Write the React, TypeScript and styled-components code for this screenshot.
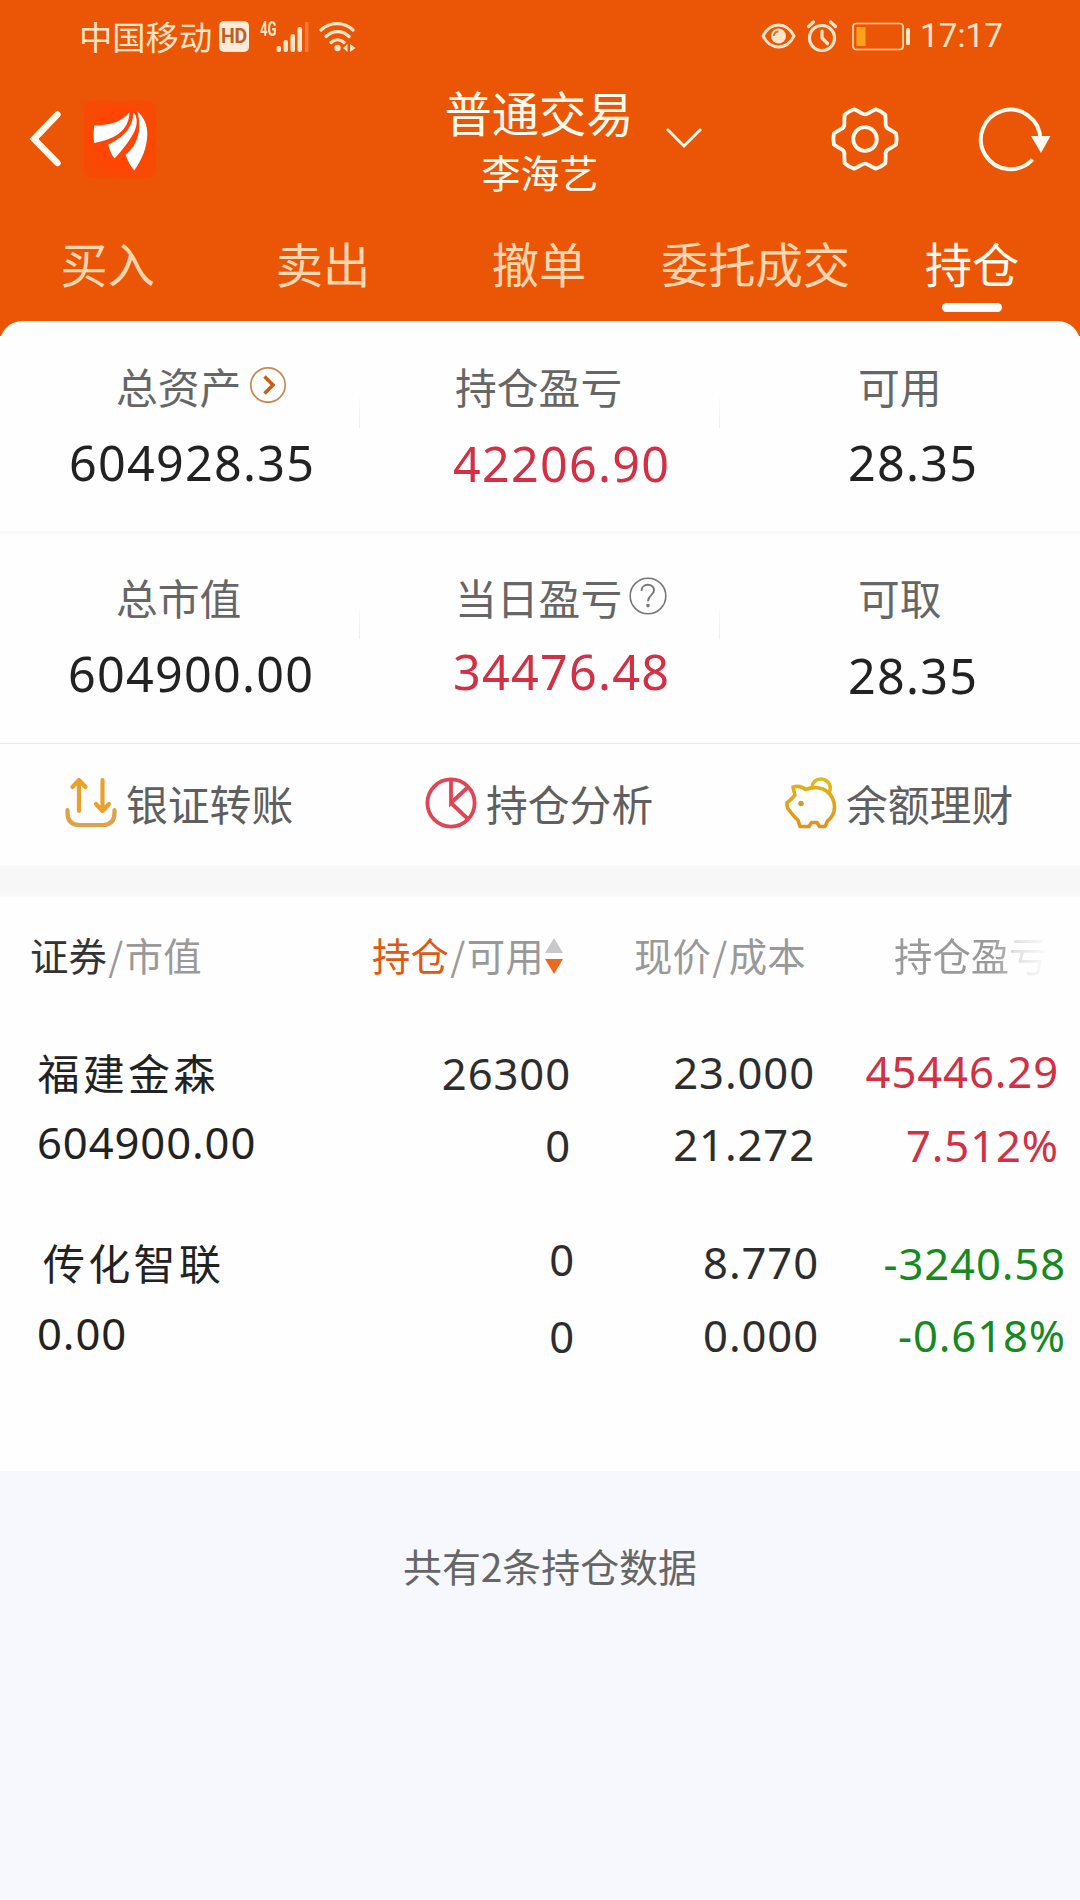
import React from "react";
import styled, { createGlobalStyle } from "styled-components";

const HAN = '"Noto Sans CJK SC", sans-serif';
const NUM = '"Noto Sans", "Noto Sans CJK SC", sans-serif';

const Global = createGlobalStyle`
  * { box-sizing: border-box; }
  body { margin: 0; background: #f7f8fd; }
  svg { display: block; flex: none; }
`;

const Page = styled.div`
  width: 1080px;
  height: 1900px;
  overflow: hidden;
  background: #f7f8fd;
  font-family: ${HAN};
  white-space: nowrap;
`;

const Header = styled.header`
  height: 336px;
  background: #eb5606;
  color: #fffaf0;
  display: flex;
  flex-direction: column;
`;

const StatusBar = styled.div`
  height: 74px;
  padding: 0 78px 0 79px;
  display: flex;
  justify-content: space-between;
  align-items: center;
  color: #ffe6c8;
`;

const StatusGroup = styled.div`
  display: flex;
  align-items: center;
  height: 74px;
`;

const Carrier = styled.span`
  font-size: 33.3px;
  line-height: 71px;
  height: 74px;
  width: 140px;
`;

const HdBadge = styled.span`
  width: 30px;
  height: 31px;
  margin-right: 11px;
  margin-bottom: 2px;
  border-radius: 5px;
  background: #fdebd8;
  color: #bb5f28;
  font: 700 19.5px/31px "Roboto", sans-serif;
  letter-spacing: -0.3px;
  text-align: center;
`;

const NetType = styled.span`
  width: 16px;
  font: 700 20px/20px "Roboto", sans-serif;
  margin-bottom: 17px;
  transform: scaleX(0.66);
  transform-origin: left center;
`;

const Signal = styled.svg`
  margin-right: 9px;
`;

const Clock = styled.span`
  font: 400 33.3px/72px "Roboto", sans-serif;
  height: 74px;
  width: 82px;
`;

const TitleBar = styled.div`
  height: 130px;
  display: grid;
  grid-template-columns: 84px 345px 220px 101px 190px 1fr;
  align-items: center;
`;

const BackSlot = styled.div`
  padding-left: 27px;
`;

const LogoBox = styled.div`
  width: 72px;
  height: 77px;
  background: radial-gradient(closest-side, #ff4503 0, #ff4503 70%, #f74b05 100%);
  border-radius: 8px;
  box-shadow: 0 0 4px #f35005;
`;

const Titles = styled.div`
  display: flex;
  flex-direction: column;
  align-items: center;
  height: 130px;
`;

const Title = styled.div`
  font-size: 47.3px;
  line-height: 60px;
  margin-top: 8px;
`;

const Subtitle = styled.div`
  font-size: 39px;
  line-height: 50px;
  margin-top: 4px;
  padding-left: 2px;
`;

const TabBar = styled.nav`
  height: 117px;
  display: grid;
  grid-template-columns: 215px 216px 216px 217px 216px;
`;

const Tab = styled.div<{ $active?: boolean }>`
  display: flex;
  flex-direction: column;
  align-items: center;
  padding-top: 29px;
  font-size: 47.3px;
  line-height: 60px;
  color: ${(p) => (p.$active ? "#fffaf0" : "#ffd6b0")};
`;

const TabLine = styled.div`
  width: 60px;
  height: 9px;
  margin-top: 10px;
  border-radius: 5px;
  background: #fff;
`;

const CardClip = styled.div`
  height: 15px;
  overflow: hidden;
`;

const CardEdge = styled.div`
  height: 44px;
  border-radius: 22px 22px 0 0;
  background: #fefefe;
`;

const Summary = styled.section`
  background: #fefefe;
`;

const SummaryRow = styled.div<{ $h: number; $line: string }>`
  height: ${(p) => p.$h}px;
  display: grid;
  grid-template-columns: 360px 360px 360px;
  border-bottom: ${(p) => p.$line};
`;

const Metric = styled.div<{ $top: number }>`
  padding-top: ${(p) => p.$top}px;
  display: grid;
  grid-template-columns: 1fr 1px;
`;

const MetricRule = styled.i<{ $show: boolean }>`
  height: 30px;
  margin-top: 37px;
  width: 1px;
  background: ${(p) => (p.$show ? "linear-gradient(#fafafa, #ececec)" : "transparent")};
`;

const MetricLabel = styled.div<{ $x: number }>`
  height: 50px;
  padding-left: ${(p) => p.$x}px;
  display: flex;
  align-items: center;
  font-size: 41.8px;
  line-height: 50px;
  color: #666;
`;

const MetricValue = styled.div<{ $x: number; $gap: number; $red?: boolean }>`
  margin-top: ${(p) => p.$gap}px;
  padding-left: ${(p) => p.$x}px;
  font-family: ${NUM};
  font-size: 48.5px;
  line-height: 60px;
  letter-spacing: 1.25px;
  color: ${(p) => (p.$red ? "#d13045" : "#222")};
`;

const IconAfter = styled.span<{ $gap: number }>`
  margin-left: ${(p) => p.$gap}px;
  margin-bottom: 3px;
`;

const Actions = styled.section`
  height: 121px;
  padding-bottom: 3px;
  background: #fefefe;
  display: grid;
  grid-template-columns: 360px 360px 360px;
`;

const Action = styled.div`
  padding-left: 65px;
  display: flex;
  align-items: center;
  gap: 9px;
  font-size: 41.8px;
  line-height: 50px;
  color: #5f5f5f;
`;

const Band = styled.div`
  height: 32px;
  background: linear-gradient(#fafafa 0, #f7f7f7 4px, #f7f7f7 27px, #fafafa 100%);
`;

const Table = styled.section`
  height: 574px;
  background: #fefefe;
`;

const HeadRow = styled.div`
  height: 134px;
  padding: 32px 0 0 30px;
  display: grid;
  grid-template-columns: 342px 262px 260px 1fr;
  font-size: 38.4px;
  line-height: 50px;
  color: #999;
`;

const HeadCell = styled.div<{ $fade?: boolean }>`
  display: flex;
  height: 50px;
  ${(p) =>
    p.$fade &&
    `width: 160px;
     mask-image: linear-gradient(90deg, #000 0, #000 96px, rgba(0,0,0,.75) 113px, rgba(0,0,0,.3) 120px, transparent 156px);`}
`;

const Strong = styled.span<{ $orange?: boolean }>`
  color: ${(p) => (p.$orange ? "#dd5a12" : "#333")};
`;

const Slash = styled.span`
  width: 18px;
  text-align: center;
`;

const SortIcon = styled.svg`
  margin: 9px 0 0 1px;
`;

const StockRow = styled.div<{ $cols: string; $h: number }>`
  height: ${(p) => p.$h}px;
  display: grid;
  grid-template-columns: ${(p) => p.$cols};
`;

const Cell = styled.div<{ $top: number; $gap: number; $color: string; $left?: boolean }>`
  padding-top: ${(p) => p.$top}px;
  padding-left: ${(p) => (p.$left ? 37 : 0)}px;
  display: flex;
  flex-direction: column;
  gap: ${(p) => p.$gap}px;
  text-align: ${(p) => (p.$left ? "left" : "right")};
  align-items: ${(p) => (p.$left ? "flex-start" : "flex-end")};
  font-family: ${NUM};
  font-size: 43.6px;
  line-height: 60px;
  letter-spacing: 0.9px;
  color: ${(p) => p.$color};
`;

const StockName = styled.div<{ $indent: number }>`
  padding-left: ${(p) => p.$indent}px;
  font-family: ${HAN};
  font-size: 42px;
  line-height: 60px;
  letter-spacing: 3.3px;
`;

const Footer = styled.footer`
  padding-top: 69px;
  padding-left: 403px;
  font-size: 38.9px;
  line-height: 50px;
  color: #666;
`;

const gearPath = (() => {
  const p = (deg: number, r: number) => {
    const a = (deg * Math.PI) / 180;
    return `${(Math.cos(a) * r).toFixed(2)} ${(Math.sin(a) * r).toFixed(2)}`;
  };
  let d = `M${p(-10, 31.6)}`;
  for (let k = 0; k < 6; k++) {
    const a = k * 60;
    d += ` Q${p(a, 32.2)} ${p(a + 10, 31.6)} Q${p(a + 18, 28)} ${p(a + 22, 26.2)} Q${p(a + 30, 23.2)} ${p(a + 38, 26.2)} Q${p(a + 42, 28)} ${p(a + 50, 31.6)}`;
  }
  return d + "Z";
})();

const ArrowBadge = () => (
  <svg width="37" height="37" viewBox="0 0 37 37" fill="none">
    <circle cx="18" cy="19" r="17.200" stroke="#c98850" strokeWidth="1.700" />
    <path d="M14.500 10.500l8.500 8.500-8.500 8.500" stroke="#cc5c16" strokeWidth="3.600" />
  </svg>
);

const HelpBadge = () => (
  <svg width="38" height="38" viewBox="0 0 38 38" fill="none" stroke="#777" strokeWidth="1.600">
    <circle cx="19" cy="19" r="17.800" />
    <path d="M12.500 14c0-4 2.800-6.300 6.300-6.300 3.600 0 6.200 2.200 6.200 5.500 0 5-6 5-6 11" strokeWidth="1.900" />
    <circle cx="19" cy="28.600" r="1" fill="#777" />
  </svg>
);

const TransferIcon = () => (
  <svg width="52" height="52" viewBox="0 0 52 52" fill="none" stroke="#eba02c" strokeWidth="4.200" strokeLinecap="round" strokeLinejoin="round">
    <path d="M14 34V3M7.500 10L14 3l6.500 7" />
    <path d="M37.500 3v31M31 27l6.500 7 6.500-7" />
    <path d="M2.500 33v3c0 8 4 12 12 12h23c8 0 12-4 12-12v-3" stroke="#dda24a" />
  </svg>
);

const PieIcon = () => (
  <svg width="52" height="52" viewBox="0 0 52 52" fill="none" stroke="#df4655" strokeWidth="3.800">
    <circle cx="26" cy="26" r="23.600" />
    <path d="M26 2.500V26l17-16M26 26l17 16" />
  </svg>
);

const PigIcon = () => (
  <svg width="52" height="52" viewBox="0 0 52 52" fill="none" strokeWidth="3.600" strokeLinejoin="round" strokeLinecap="round">
    <defs>
      <linearGradient id="pig" x1="0" y1="0" x2="0" y2="1">
        <stop offset="0" stopColor="#e0b01c" />
        <stop offset="1" stopColor="#e39220" />
      </linearGradient>
    </defs>
    <path d="M27 10.500C27.500 5 31 2 36 2s9.300 4 9.300 9c0 2-.6 3.500-1.300 5" stroke="#e2b81c" />
    <path
      d="M8 10C12 9 17 9 20.500 12.500 28 9.500 37 10 42 14.500 47 18.500 49.500 24 49.500 30 49.500 36 47 40.500 42.500 44L40 49.500H34.500L32 45.500H26.500L24 49.500H15L13 43C8.500 40 6.500 35.500 4 33 1.800 31 1.800 29 2 25.500 5 24 7 21.500 10 18 9 15 8.500 12.500 8 10z"
      stroke="url(#pig)"
    />
    <circle cx="16" cy="26.500" r="2.800" fill="#c9a02c" />
  </svg>
);

type M = { label: string; lx: number; value: string; vx: number; gap: number; red?: boolean; icon?: React.ReactNode; iconGap?: number };

const row1: M[] = [
  { label: "总资产", lx: 116, value: "604928.35", vx: 69, gap: 21, icon: <ArrowBadge />, iconGap: 9 },
  { label: "持仓盈亏", lx: 95, value: "42206.90", vx: 93, gap: 22, red: true },
  { label: "可用", lx: 138, value: "28.35", vx: 128, gap: 21 },
];

const row2: M[] = [
  { label: "总市值", lx: 116, value: "604900.00", vx: 68, gap: 21 },
  { label: "当日盈亏", lx: 95, value: "34476.48", vx: 93, gap: 19, red: true, icon: <HelpBadge />, iconGap: 7 },
  { label: "可取", lx: 138, value: "28.35", vx: 128, gap: 23 },
];

const Metrics = ({ items, top }: { items: M[]; top: number }) => (
  <>
    {items.map((m, i) => (
      <Metric key={m.label} $top={top}>
        <div>
          <MetricLabel $x={m.lx}>
            {m.label}
            {m.icon && <IconAfter $gap={m.iconGap ?? 0}>{m.icon}</IconAfter>}
          </MetricLabel>
          <MetricValue $x={m.vx} $gap={m.gap} $red={m.red}>{m.value}</MetricValue>
        </div>
        <MetricRule $show={i < 2} />
      </Metric>
    ))}
  </>
);

const INK = "#2d2d2d";
const RED = "#d13045";
const GREEN = "#16891f";

const stocks = [
  {
    name: "福建金森", indent: 0.5, h: 185, cols: "360px 211px 244px 244px", nameTop: 11, nameGap: 10, market: "604900.00",
    cells: [
      { a: "26300", b: "0", top: 12, gap: 12, color: INK },
      { a: "23.000", b: "21.272", top: 11, gap: 12, color: INK },
      { a: "45446.29", b: "7.512%", top: 10, gap: 14, color: RED },
    ],
  },
  {
    name: "传化智联", indent: 6, h: 255, cols: "360px 215px 244px 247px", nameTop: 16, nameGap: 11, market: "0.00",
    cells: [
      { a: "0", b: "0", top: 13, gap: 17, color: INK },
      { a: "8.770", b: "0.000", top: 16, gap: 13, color: INK },
      { a: "-3240.58", b: "-0.618%", top: 17, gap: 12, color: GREEN },
    ],
  },
];

export default function App() {
  return (
    <Page>
      <Global />
      <Header>
        <StatusBar>
          <StatusGroup>
            <Carrier>中国移动</Carrier>
            <HdBadge>HD</HdBadge>
            <NetType>4G</NetType>
            <Signal width="34" height="32" viewBox="0 0 34 32" fill="#ffe6c8">
              <rect x="0.500" y="25" width="4.500" height="6" rx="2" />
              <rect x="7.500" y="19" width="4.500" height="12" rx="2" />
              <rect x="14.500" y="13" width="4.500" height="18" rx="2" />
              <rect x="21.500" y="6" width="4.500" height="25" rx="2" />
              <rect x="29" y="1" width="3.500" height="30" rx="1" fill="#fb7a3c" />
            </Signal>
            <svg width="38" height="32" viewBox="0 0 38 32" fill="none" stroke="#ffe6c8" strokeWidth="3.200" strokeLinecap="round">
              <path d="M2 9C11 .5 25 .5 34 9M7 15.500c7-6.500 16.500-6.500 23 0M12 21.500c4-3.700 9-3.700 13 0" />
              <circle cx="18.500" cy="27" r="3.200" fill="#ffe6c8" stroke="none" />
              <path d="M28.500 23v8l-4.500-4zM31 23v8l5.500-4z" fill="#ffe6c8" stroke="none" />
            </svg>
          </StatusGroup>
          <StatusGroup>
            <svg width="45" height="34" viewBox="0 0 45 34" fill="none" stroke="#ffe6c8" strokeWidth="2.800">
              <path d="M2 16C5.500 9 11 5 17.500 5s12 4 15.500 11C29.500 23 23.500 27 17.500 27S5.500 23 2 16z" />
              <circle cx="17.500" cy="16" r="7.500" fill="#ffe6c8" stroke="none" />
              <path d="M13 16c0-3 2-4.500 4.500-4.500" stroke="#d8763c" strokeWidth="2" />
            </svg>
            <svg width="45" height="34" viewBox="0 0 45 34" fill="none" stroke="#ffe6c8" strokeWidth="3.200" strokeLinecap="round">
              <circle cx="16" cy="18" r="12.500" />
              <path d="M16 11v7l5.500 5.500M2.500 6.500L7.500 2M29.500 6.500L24.500 2" />
            </svg>
            <svg width="69" height="34" viewBox="0 0 69 34" fill="none" stroke="#ffd9a8" strokeWidth="1.700">
              <rect x="2" y="3.500" width="50" height="26" rx="3" />
              <rect x="5.500" y="7" width="9" height="19" fill="#faa31a" stroke="none" />
              <rect x="55" y="8" width="4" height="17" rx="1.500" fill="#ffe6c8" stroke="none" />
            </svg>
            <Clock>17:17</Clock>
          </StatusGroup>
        </StatusBar>
        <TitleBar>
          <BackSlot>
            <svg width="36" height="58" viewBox="0 0 36 58" fill="none" stroke="#fffaf0" strokeWidth="6.400">
              <path d="M30.500 4.500L7 29l23.500 24" strokeLinecap="round" />
            </svg>
          </BackSlot>
          <LogoBox>
            <svg width="72" height="77" viewBox="0 0 72 77" fill="#fff">
              <path d="M45.500 11C38 20.500 28 24 10.300 24.500c-.8 6-.8 11-.3 17.500C29 38.500 45 31 45.500 11z" />
              <path d="M49.500 11c4 5 4 12 1.500 18-4 9-11 18-20.500 28.500-3-4-5.200-8.500-6.200-14C38 37 49 28 49.500 11z" />
              <path d="M53.500 10.500C60 16 63.500 24 63.300 33 63 47 58 58 50.300 69.500 46.500 65 43.500 60 41.700 54 54.500 43 58 28 53.500 10.500z" />
            </svg>
          </LogoBox>
          <Titles>
            <Title>普通交易</Title>
            <Subtitle>李海艺</Subtitle>
          </Titles>
          <svg width="70" height="24" viewBox="0 0 70 24" fill="none" stroke="#fffaf0" strokeWidth="2.800">
            <path d="M18 2l17 17L52 2" />
          </svg>
          <svg width="72" height="72" viewBox="-36 -36 72 72" fill="none" stroke="#fffaf0" strokeWidth="3.800" transform="translate(79 0)">
            <path d={gearPath} strokeLinejoin="round" />
            <circle r="11.800" />
          </svg>
          <svg width="80" height="70" viewBox="0 0 80 70" fill="none" stroke="#fffaf0" strokeWidth="4" transform="translate(36 0)">
            <path d="M64.300 35A29.700 29.700 0 1 0 56.500 55.500" />
            <path d="M55 32h19.500L65 49z" fill="#fffaf0" stroke="none" />
          </svg>
        </TitleBar>
        <TabBar>
          <Tab>买入</Tab>
          <Tab>卖出</Tab>
          <Tab>撤单</Tab>
          <Tab>委托成交</Tab>
          <Tab $active>
            持仓
            <TabLine />
          </Tab>
        </TabBar>
        <CardClip>
          <CardEdge />
        </CardClip>
      </Header>
      <Summary>
        <SummaryRow $h={198} $line="3px solid #f9f9f9">
          <Metrics items={row1} top={25} />
        </SummaryRow>
        <SummaryRow $h={210} $line="1px solid #ebebeb">
          <Metrics items={row2} top={38} />
        </SummaryRow>
      </Summary>
      <Actions>
        <Action><TransferIcon />银证转账</Action>
        <Action><PieIcon />持仓分析</Action>
        <Action><PigIcon />余额理财</Action>
      </Actions>
      <Band />
      <Table>
        <HeadRow>
          <HeadCell><Strong>证券</Strong><Slash>/</Slash>市值</HeadCell>
          <HeadCell>
            <Strong $orange>持仓</Strong><Slash>/</Slash>可用
            <SortIcon width="18" height="36" viewBox="0 0 18 36">
              <path d="M9 0l9 15H0z" fill="#c8c8ca" />
              <path d="M0 21h18L9 36z" fill="#ec6a1c" />
            </SortIcon>
          </HeadCell>
          <HeadCell>现价<Slash>/</Slash>成本</HeadCell>
          <HeadCell $fade>持仓盈亏</HeadCell>
        </HeadRow>
        {stocks.map((s) => (
          <StockRow key={s.name} $cols={s.cols} $h={s.h}>
            <Cell $left $top={s.nameTop} $gap={s.nameGap} $color="#222">
              <StockName $indent={s.indent}>{s.name}</StockName>
              <div>{s.market}</div>
            </Cell>
            {s.cells.map((c, i) => (
              <Cell key={i} $top={c.top} $gap={c.gap} $color={c.color}>
                <div>{c.a}</div>
                <div>{c.b}</div>
              </Cell>
            ))}
          </StockRow>
        ))}
      </Table>
      <Footer>共有2条持仓数据</Footer>
    </Page>
  );
}
